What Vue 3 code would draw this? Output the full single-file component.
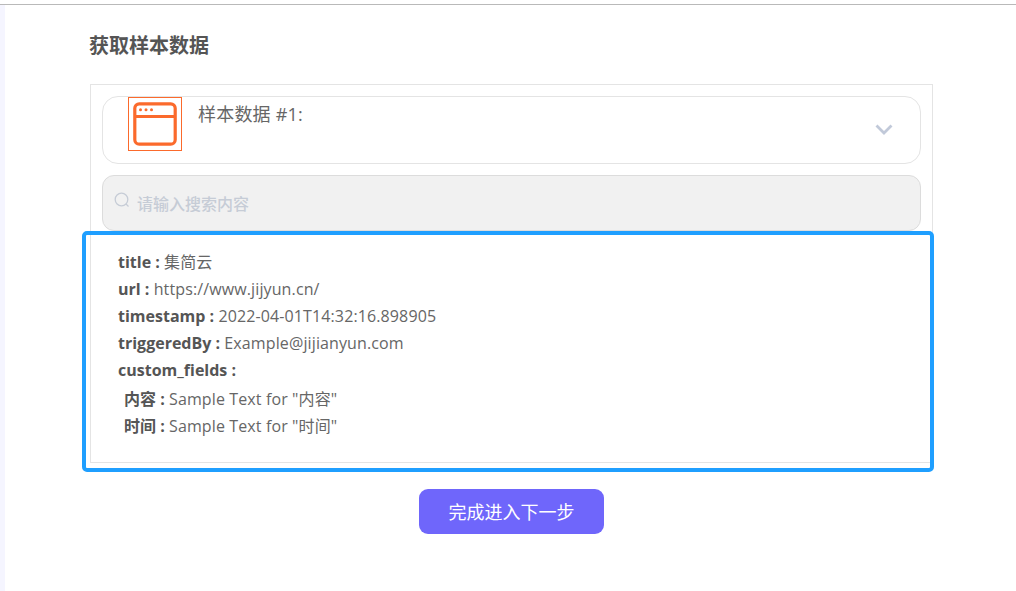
<script setup>
const fields = [
  { k: 'title :', v: '集简云' },
  { k: 'url :', v: 'https://www.jijyun.cn/' },
  { k: 'timestamp :', v: '2022-04-01T14:32:16.898905' },
  { k: 'triggeredBy :', v: 'Example@jijianyun.com' },
  { k: 'custom_fields :', v: '' },
]
const customs = [
  { k: '内容 :', v: 'Sample Text for "内容"' },
  { k: '时间 :', v: 'Sample Text for "时间"' },
]
</script>

<template>
  <div class="page">
    <div class="topline"></div>
    <main class="content">
      <h2 class="heading">获取样本数据</h2>
      <section class="panel">
        <div class="sample-card">
          <div class="icon-box">
            <svg width="44" height="44" viewBox="0 0 44 44" fill="none">
              <rect x="1.800" y="1.800" width="40.400" height="40.400" rx="4.500" stroke="#fb6a2c" stroke-width="3.200" />
              <path d="M2 14.500H42" stroke="#fb6a2c" stroke-width="3" />
              <circle cx="7.500" cy="7.800" r="1.500" fill="#fb6a2c" />
              <circle cx="13" cy="7.800" r="1.500" fill="#fb6a2c" />
              <circle cx="18.500" cy="7.800" r="1.500" fill="#fb6a2c" />
            </svg>
          </div>
          <div class="sample-title">样本数据 #1:</div>
          <svg class="chevron" width="18" height="12" viewBox="0 0 18 12" fill="none">
            <path d="M1.500 2.500L9 10L16.500 2.500" stroke="#c1c9d9" stroke-width="2.800" />
          </svg>
        </div>
        <div class="search">
          <svg class="search-icon" width="16" height="16" viewBox="0 0 16 16" fill="none">
            <circle cx="7.500" cy="7.500" r="6.300" stroke="#c6ccd6" stroke-width="1.300" />
            <path d="M12 12L14.500 14.500" stroke="#c6ccd6" stroke-width="1.300" />
          </svg>
          <span class="placeholder">请输入搜索内容</span>
        </div>
        <div class="fields">
          <div v-for="f in fields" :key="f.k" class="row">
            <b>{{ f.k }}</b> {{ f.v }}
          </div>
          <div class="customs">
            <div v-for="c in customs" :key="c.k" class="row">
              <b>{{ c.k }}</b> {{ c.v }}
            </div>
          </div>
        </div>
        <div class="highlight"></div>
      </section>
      <div class="actions">
        <button class="next" type="button">完成进入下一步</button>
      </div>
    </main>
  </div>
</template>

<style scoped>
.page {
  width: 1016px;
  height: 591px;
  box-sizing: border-box;
  padding-top: 4px;
  overflow: hidden;
  background: #fff;
  font-family: "Open Sans", "Noto Sans CJK SC", sans-serif;
  color: #555;
}
.topline {
  height: 1px;
  background: #b9b9b9;
}
.content {
  height: 586px;
  box-sizing: border-box;
  margin-left: 5px;
  padding: 0 83px 0 85px;
  background: #fff;
  box-shadow: -5px 0 0 #f5f5ff;
}
.heading {
  margin: 0 0 0 -1px;
  padding-top: 26px;
  height: 52px;
  box-sizing: border-box;
  font-size: 20px;
  line-height: 30px;
  font-weight: 700;
  color: #555;
}
.panel {
  position: relative;
  box-sizing: border-box;
  width: 843px;
  height: 379px;
  margin-top: 27px;
  padding: 11px 11px 0;
  border: 1px solid #e4e4e4;
}
.sample-card {
  position: relative;
  display: flex;
  align-items: flex-start;
  box-sizing: border-box;
  height: 68px;
  border: 1px solid #e4e4e4;
  border-radius: 16px;
}
.icon-box {
  display: flex;
  align-items: center;
  justify-content: center;
  box-sizing: border-box;
  width: 54px;
  height: 54px;
  margin-left: 25px;
  border: 1px solid #fb6a2c;
}
.sample-title {
  margin: 4px 0 0 16px;
  font-size: 18px;
  line-height: 27px;
  letter-spacing: 0.2px;
  color: #666;
}
.chevron {
  position: absolute;
  right: 27px;
  top: 26px;
}
.search {
  display: flex;
  align-items: center;
  box-sizing: border-box;
  height: 56px;
  margin-top: 11px;
  padding-left: 11px;
  background: #f1f1f1;
  border: 1px solid #dcdcdc;
  border-radius: 12px;
}
.search-icon {
  margin-top: -6px;
}
.placeholder {
  margin-left: 7px;
  margin-top: 0;
  font-size: 16px;
  font-weight: 500;
  color: #c6ccd6;
}
.fields {
  padding: 18px 0 0 16px;
  font-size: 16px;
  line-height: 27px;
  letter-spacing: 0.12px;
  color: #666;
}
.row b {
  font-weight: 700;
  letter-spacing: 0;
  color: #555;
}
.customs {
  margin-top: 2px;
  padding-left: 6px;
}
.highlight {
  position: absolute;
  left: -9px;
  top: 146px;
  width: 852px;
  height: 241px;
  box-sizing: border-box;
  border: 4px solid #1f9fff;
  border-radius: 5px;
  pointer-events: none;
}
.actions {
  display: flex;
  justify-content: center;
  margin-top: 26px;
  width: 843px;
}
.next {
  width: 185px;
  height: 45px;
  padding: 0 0 2px;
  border: 0;
  border-radius: 9px;
  background: #6f66fb;
  color: #fff;
  font-family: inherit;
  font-size: 18px;
}
</style>
